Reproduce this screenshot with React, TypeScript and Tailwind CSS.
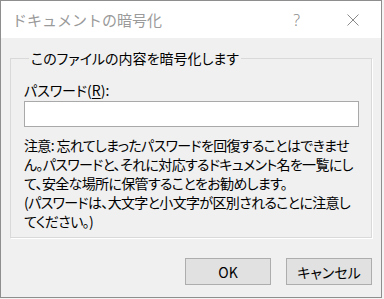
import React from "react";

const font = { fontFamily: '"Noto Sans CJK JP", "Noto Sans", sans-serif' };

export default function App() {
  return (
    <div className="w-[384px] h-[299px] bg-[#f4f4f4]" style={font}>
      <div className="w-[382px] h-[298px] border border-[#8e8e8e] flex flex-col bg-[#f0f0f0]">
        <div className="h-[37px] bg-white flex items-center pl-[11px] shrink-0">
          <span className="text-[15px] text-[#9a9a9a] leading-none">ドキュメントの暗号化</span>
          <span className="ml-auto mr-[47px] text-[16px] text-[#8a8a8a] font-light leading-none" style={{ fontFamily: '"Segoe UI", "Noto Sans", sans-serif' }}>?</span>
          <svg width="12" height="12" viewBox="0 0 12 12" className="mr-[22px]">
            <path d="M0.5 0.5 L11.5 11.5 M11.5 0.5 L0.5 11.5" stroke="#8a8a8a" strokeWidth="1" fill="none" />
          </svg>
        </div>
        <div className="flex flex-col px-[9px] pt-[10px] text-[14px] text-black [font-feature-settings:'palt']">
          <fieldset className="border border-[#d9d9d9] shadow-[1px_1px_0_#ffffff] pl-[13px] pr-[12px] pb-[6px]">
            <legend className="ml-[5px] px-[2px] leading-[20px]">このファイルの内容を暗号化します</legend>
            <div className="mt-[12px] leading-[20px]">
              パスワード(<span className="underline underline-offset-2">R</span>):
            </div>
            <div className="mt-[1px] h-[26px] bg-white border border-[#a9a9a9]" />
            <div className="mt-[9px] leading-[19px] whitespace-nowrap tracking-[-0.65px]">
              <div>注意: 忘れてしまったパスワードを回復することはできませ</div>
              <div>ん。パスワードと、それに対応するドキュメント名を一覧にし</div>
              <div>て、安全な場所に保管することをお勧めします。</div>
              <div>(パスワードは、大文字と小文字が区別されることに注意し</div>
              <div>てください。)</div>
            </div>
          </fieldset>
          <div className="flex justify-end gap-[15px] mt-[20px] pr-[-1px]">
            <button className="w-[86px] h-[27px] bg-[#e1e1e1] border border-[#adadad] text-[14px] leading-none">OK</button>
            <button className="w-[86px] h-[27px] bg-[#e1e1e1] border border-[#adadad] text-[14px] leading-none">キャンセル</button>
          </div>
        </div>
      </div>
    </div>
  );
}
